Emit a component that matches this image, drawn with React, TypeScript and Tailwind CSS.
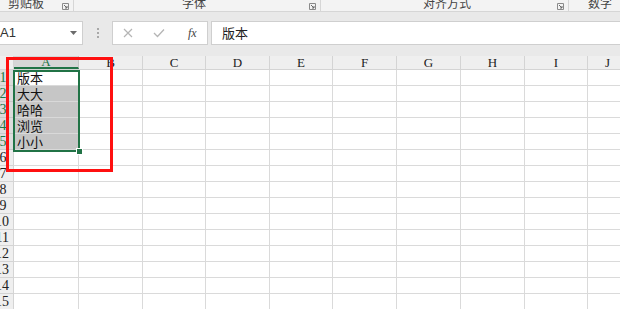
import React from "react";

const COLS: [string, number][] = [
  ["A", 65], ["B", 64], ["C", 63], ["D", 64], ["E", 63], ["F", 64], ["G", 64], ["H", 64], ["I", 63], ["J", 40],
];
const ROWS = Array.from({ length: 15 }, (_, i) => i + 1);
const DATA: Record<number, string> = { 1: "版本", 2: "大大", 3: "哈哈", 4: "浏览", 5: "小小" };

const serif = { fontFamily: '"Liberation Serif", "DejaVu Serif", serif' };
const cjk = { fontFamily: '"Noto Sans CJK SC", "Liberation Sans", sans-serif' };

function Launcher() {
  return (
    <svg width="7" height="7" viewBox="0 0 7 7" className="shrink-0">
      <path d="M0.5 0.5H6.5V6.5H0.5Z" fill="none" stroke="#8a8a8a" strokeWidth="1" />
      <path d="M2 2L5 5M5 3V5H3" fill="none" stroke="#6a6a6a" strokeWidth="1" />
    </svg>
  );
}

export default function App() {
  return (
    <div className="relative w-[620px] h-[309px] overflow-hidden bg-white" style={cjk}>
      {/* Ribbon group labels */}
      <div className="flex h-[12px] overflow-hidden bg-[#f3f3f3] border-b border-[#d6d6d6] text-[12px] text-[#444] leading-none">
        <div className="w-[74px] flex items-start border-r border-[#d6d6d6] shrink-0">
          <span className="ml-[8px] mt-[-3px]">剪贴板</span>
          <div className="ml-auto mr-[4px] mt-[3px]"><Launcher /></div>
        </div>
        <div className="w-[247px] flex items-start border-r border-[#d6d6d6] shrink-0">
          <span className="ml-[108px] mt-[-3px]">字体</span>
          <div className="ml-auto mr-[4px] mt-[3px]"><Launcher /></div>
        </div>
        <div className="w-[248px] flex items-start border-r border-[#d6d6d6] shrink-0">
          <span className="ml-[102px] mt-[-3px]">对齐方式</span>
          <div className="ml-auto mr-[4px] mt-[3px]"><Launcher /></div>
        </div>
        <div className="flex-1 flex items-start">
          <span className="ml-[19px] mt-[-3px]">数字</span>
        </div>
      </div>

      {/* Formula bar area */}
      <div className="bg-[#e9e9e9] pt-[9px] pb-[11px]">
        <div className="flex h-[24px] items-stretch">
          <div className="w-[83px] shrink-0 bg-white border border-l-0 border-[#cfcfcf] flex items-center text-[13px] text-[#333]" style={{ fontFamily: '"Liberation Sans", sans-serif' }}>
            <span className="ml-[0px]">A1</span>
            <svg width="7" height="4" viewBox="0 0 7 4" className="ml-auto mr-[5px]">
              <path d="M0 0H7L3.5 4Z" fill="#6b6b6b" />
            </svg>
          </div>
          <div className="w-[29px] shrink-0 flex flex-col items-center justify-center gap-[2px]">
            <div className="w-[2px] h-[2px] bg-[#a8a8a8]" />
            <div className="w-[2px] h-[2px] bg-[#a8a8a8]" />
            <div className="w-[2px] h-[2px] bg-[#a8a8a8]" />
          </div>
          <div className="w-[96px] shrink-0 bg-white border border-[#cfcfcf] flex items-center">
            <svg width="10" height="10" viewBox="0 0 10 10" className="ml-[10px]">
              <path d="M1 1L9 9M9 1L1 9" stroke="#b5b5b5" strokeWidth="1.2" />
            </svg>
            <svg width="12" height="10" viewBox="0 0 12 10" className="ml-[20px]">
              <path d="M1 5L4.5 8.5L11 1.5" fill="none" stroke="#b5b5b5" strokeWidth="1.3" />
            </svg>
            <span className="ml-[23px] text-[12px] italic text-[#444]" style={serif}>fx</span>
          </div>
          <div className="ml-[3px] flex-1 bg-white border border-r-0 border-[#cfcfcf] flex items-center text-[13px] text-[#222]">
            <span className="ml-[10px]">版本</span>
          </div>
        </div>
      </div>

      {/* Column headers */}
      <div className="flex h-[14px] bg-[#efefef] border-b border-[#d4d4d4]" style={serif}>
        <div className="w-[14px] shrink-0 border-r border-[#d4d4d4]" />
        {COLS.map(([c, w]) => (
          <div
            key={c}
            className={
              c === "A"
                ? "shrink-0 flex items-center justify-center text-[13px] leading-none text-[#217346] bg-[#d6d6d6] border-r border-[#c4c4c4] border-b-2 border-b-[#217346]"
                : "shrink-0 flex items-center justify-center text-[13px] leading-none text-[#222] border-r border-[#d4d4d4]"
            }
            style={{ width: w }}
          >
            {c}
          </div>
        ))}
      </div>

      {/* Rows */}
      {ROWS.map((r) => {
        const sel = r <= 5;
        return (
          <div key={r} className="flex h-[16px]">
            <div
              className={
                sel
                  ? "w-[14px] shrink-0 overflow-hidden bg-[#dcdcdc] border-r border-b border-[#c8c8c8] text-[#217346]"
                  : "w-[14px] shrink-0 overflow-hidden bg-[#efefef] border-r border-b border-[#d4d4d4] text-[#222]"
              }
              style={serif}
            >
              {r < 10 ? (
                <div className="w-[20px] ml-[-7px] text-center text-[14px] leading-[15px]">{r}</div>
              ) : (
                <div className="w-[20px] ml-[-11px] text-right text-[14px] leading-[15px]">{r}</div>
              )}
            </div>
            {COLS.map(([c, w]) => (
              <div
                key={c}
                className={
                  c === "A" && r >= 2 && r <= 5
                    ? "shrink-0 bg-[#c6c6c6] border-r border-b border-[#d9d9d9] text-[13px] leading-[15px] text-[#111] pl-[3px]"
                    : "shrink-0 border-r border-b border-[#dadada] text-[13px] leading-[15px] text-[#111] pl-[3px]"
                }
                style={{ width: w }}
              >
                {c === "A" ? DATA[r] ?? "" : ""}
              </div>
            ))}
          </div>
        );
      })}

      {/* Selection border */}
      <div className="absolute left-[13px] top-[70px] w-[67px] h-[82px] border-2 border-[#217346] pointer-events-none" />
      <div className="absolute left-[76px] top-[148px] w-[5px] h-[5px] bg-[#217346] border border-white box-content" />

      {/* Red annotation rectangle */}
      <div className="absolute left-[6px] top-[57px] w-[107px] h-[115px] border-[3px] border-[#ff1010] pointer-events-none" />
    </div>
  );
}
